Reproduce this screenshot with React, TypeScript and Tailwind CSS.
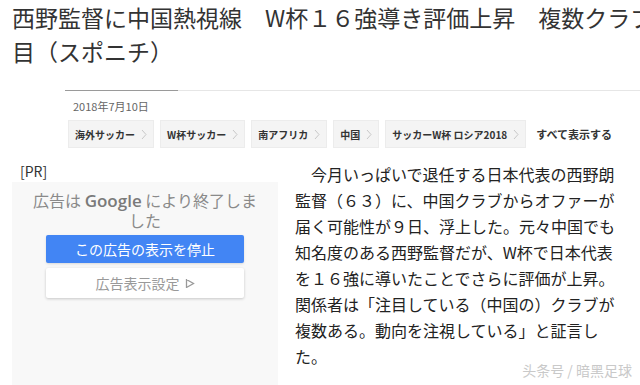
const jp = { fontFamily: '"Noto Sans CJK JP", "Noto Sans", sans-serif' };

const tags = ['海外サッカー', 'W杯サッカー', '南アフリカ', '中国', 'サッカーW杯 ロシア2018'];

function Chevron() {
    return (
        <svg width="6" height="11" viewBox="0 0 6 11" className="ml-[6px] shrink-0">
            <path d="M1 1 L5 5.5 L1 10" fill="none" stroke="#c8c8c8" strokeWidth="1" />
        </svg>
    );
}

export default function App() {
    return (
        <div className="relative w-[640px] h-[385px] overflow-hidden bg-white text-[#222]" style={jp}>
            {/* Headline */}
            <h1 className="pl-[12px] text-[23px] leading-[34px] whitespace-nowrap text-[#333]">
                西野監督に中国熱視線　W杯１６強導き評価上昇　複数クラブ注
                <br />
                目（スポニチ）
            </h1>

            {/* Rule */}
            <div className="ml-[65px] mt-[22px] flex">
                <div className="w-[113px] h-px bg-[#9a9a9a]" />
                <div className="flex-1 h-px bg-[#e6e6e6]" />
            </div>

            <div className="ml-[73px] mt-[7px] text-[11px] leading-[16px] text-[#666]">2018年7月10日</div>

            {/* Category tags */}
            <div className="ml-[68px] mt-[6px] flex items-center gap-[6px] whitespace-nowrap">
                {tags.map((t) => (
                    <div key={t} className="shrink-0 h-[28px] flex items-center px-[6px] bg-[#f4f4f4] border border-[#ececec] text-[10px] font-bold text-[#333]">
                        {t}
                        <Chevron />
                    </div>
                ))}
                <div className="ml-[4px] shrink-0 text-[11px] font-bold text-[#333]">すべて表示する</div>
            </div>

            <div className="mt-[13px] flex">
                {/* Ad */}
                <div className="ml-[12px] w-[266px] shrink-0">
                    <div className="pl-[8px] text-[14px] leading-[21px] text-[#333]">[PR]</div>
                    <div className="h-[210px] bg-[#f8f8f8] pt-[8px] px-[15px]">
                        <p className="text-center text-[16px] leading-[20px] text-[#8a8a8a]">
                            広告は <span className="text-[17px] leading-none font-semibold text-[#7a7a7a]" style={{ fontFamily: '"Open Sans", sans-serif' }}>Google</span> により終了しました
                        </p>
                        <div className="mx-[19px] mt-[5px] h-[28px] rounded-[2px] bg-[#4285f4] flex items-center justify-center text-[14px] text-white shadow-sm">
                            この広告の表示を停止
                        </div>
                        <div className="mx-[19px] mt-[5px] h-[30px] rounded-[2px] bg-white flex items-center justify-center text-[14px] text-[#999] shadow-[0_1px_3px_rgba(0,0,0,0.2)]">
                            広告表示設定
                            <svg width="10" height="11" viewBox="0 0 10 11" className="ml-[5px]">
                                <path d="M1.5 1 L1.5 10 M1.5 1.5 L8.5 5.5 L1.5 9.5" fill="none" stroke="#999" strokeWidth="1.3" />
                            </svg>
                        </div>
                    </div>
                </div>

                {/* Article */}
                <p className="ml-[17px] w-[320px] shrink-0 text-[16px] leading-[26px] text-[#222] indent-[1em]">
                    今月いっぱいで退任する日本代表の西野朗監督（６３）に、中国クラブからオファーが届く可能性が９日、浮上した。元々中国でも知名度のある西野監督だが、W杯で日本代表を１６強に導いたことでさらに評価が上昇。関係者は「注目している（中国の）クラブが複数ある。動向を注視している」と証言した。
                </p>
            </div>

            {/* Watermark */}
            <div
                className="absolute right-[8px] bottom-[4px] text-[14px] text-[#c9c9c9]"
                style={{ fontFamily: '"Noto Sans CJK SC", sans-serif' }}
            >
                头条号 / 暗黑足球
            </div>
        </div>
    );
}
